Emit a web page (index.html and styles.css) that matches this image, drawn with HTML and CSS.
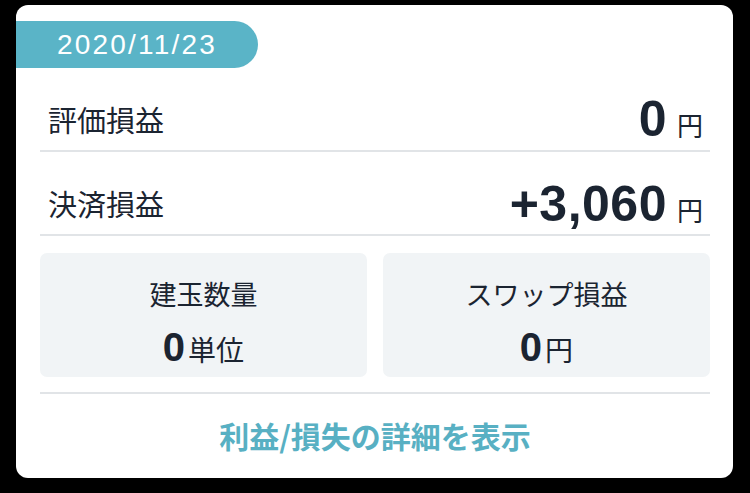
FILE: index.html
```html
<!DOCTYPE html>
<html lang="ja">
  <head>
    <meta charset="UTF-8" />
    <title>損益サマリー</title>
    <link rel="stylesheet" href="styles.css">
  </head>
  <body>
    <div class="card">
      <div class="date-tag">2020/11/23</div>

      <div class="card-body">
        <div class="row">
          <span class="row-label">評価損益</span>
          <span class="row-value">0<span class="unit">円</span></span>
        </div>
        <div class="row">
          <span class="row-label">決済損益</span>
          <span class="row-value">+3,060<span class="unit">円</span></span>
        </div>

        <div class="boxes">
          <div class="box">
            <div class="box-label">建玉数量</div>
            <div class="box-value">0<span class="box-unit">単位</span></div>
          </div>
          <div class="box">
            <div class="box-label">スワップ損益</div>
            <div class="box-value">0<span class="box-unit">円</span></div>
          </div>
        </div>

        <div class="detail-link">利益/損失の詳細を表示</div>
      </div>
    </div>
  </body>
</html>
```

FILE: styles.css
```css
body {
  margin: 0;
  padding: 5px 17px 15px 16px;
  background-color: #000;
  font-family: "Noto Sans CJK JP", "Liberation Sans", sans-serif;
  color: #1b2431;
}
.card {
  background-color: #fff;
  border-radius: 12px;
  padding-top: 16px;
  height: 473px;
  box-sizing: border-box;
}
.date-tag {
  width: 242px;
  height: 47px;
  box-sizing: border-box;
  padding-left: 41px;
  background-color: #5ab4c7;
  border-radius: 0 24px 24px 0;
  color: #fff;
  font-family: "Liberation Sans", sans-serif;
  font-size: 28px;
  letter-spacing: 2.2px;
  line-height: 47px;
}
.card-body {
  padding: 0 23px 0 24px;
}
.row {
  display: flex;
  justify-content: space-between;
  align-items: center;
  height: 84px;
  box-sizing: border-box;
  padding: 20px 7px 0 8px;
  border-bottom: 2px solid #e1e4e7;
}
.row + .row {
  padding-top: 21px;
}
.row-label {
  font-size: 29px;
  line-height: 1;
}
.row-value {
  font-family: "Liberation Sans", sans-serif;
  font-weight: bold;
  font-size: 50px;
  letter-spacing: 0.5px;
  line-height: 1;
}
.unit {
  font-family: "Noto Sans CJK JP", sans-serif;
  font-weight: normal;
  font-size: 26px;
  letter-spacing: 0;
  margin-left: 10px;
}
.boxes {
  display: grid;
  grid-template-columns: 1fr 1fr;
  gap: 16px;
  margin-top: 17px;
  padding-bottom: 15px;
  border-bottom: 2px solid #e1e4e7;
}
.box {
  height: 124px;
  box-sizing: border-box;
  padding-top: 22px;
  background-color: #f1f4f6;
  border-radius: 7px;
  text-align: center;
}
.box-label {
  font-size: 27px;
  line-height: 38px;
}
.box-value {
  margin-top: 14px;
  font-family: "Liberation Sans", sans-serif;
  font-weight: bold;
  font-size: 40px;
  line-height: 40px;
}
.box-unit {
  font-family: "Noto Sans CJK JP", sans-serif;
  font-weight: normal;
  font-size: 28px;
  margin-left: 3px;
}
.detail-link {
  height: 83px;
  line-height: 83px;
  text-align: center;
  color: #58b0c3;
  font-weight: bold;
  font-size: 30px;
}
```
